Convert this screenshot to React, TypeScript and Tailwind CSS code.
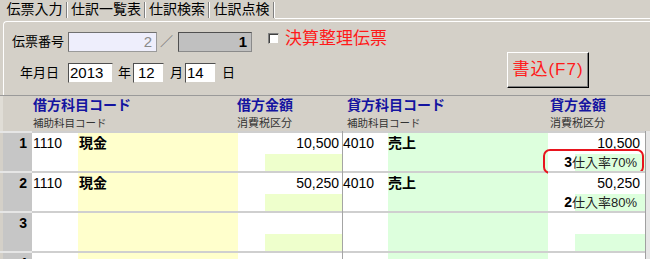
const cols = "grid grid-cols-[32px_46px_160px_104px_1px_45px_160px_97px_5px]";

type Row = {
  no: string;
  dc?: string;
  dn?: string;
  da?: string;
  cc?: string;
  cn?: string;
  ca?: string;
  tax?: [string, string];
  mark?: boolean;
};

const rows: Row[] = [
  { no: "1", dc: "1110", dn: "現金", da: "10,500", cc: "4010", cn: "売上", ca: "10,500", tax: ["3", "仕入率70%"], mark: true },
  { no: "2", dc: "1110", dn: "現金", da: "50,250", cc: "4010", cn: "売上", ca: "50,250", tax: ["2", "仕入率80%"] },
  { no: "3" },
  { no: "4" },
];

function Tab({ w, children }: { w: string; children: string }) {
  return (
    <div className="flex">
      <div className={`${w} text-center pt-[1px]`}>{children}</div>
      <div className="w-px bg-[#808080] mt-[2px] mb-[1px]" />
      <div className="w-px bg-white mt-[2px] mb-[1px]" />
    </div>
  );
}

function GridRow({ r }: { r: Row }) {
  return (
    <div className={`${cols} h-[40px] text-[14px] leading-[21px]`}>
      {/* row number */}
      <div className="border-t-2 border-[#e6e6e6] bg-[#c6c6c6] shadow-[inset_3px_0_0_#d4d0c8] pr-[5px] text-right font-bold">
        {r.no}
      </div>
      {/* debit */}
      <div className="border-t-2 border-[#cfcfcf] bg-white pl-[1px]">{r.dc}</div>
      <div className="border-t-2 border-[#cfcfcf] bg-[#ffffcc] pl-[1px] font-bold">{r.dn}</div>
      <div className="border-t-2 border-[#cfcfcf] bg-white flex flex-col">
        <div className="h-[21px] text-right pr-[3px]">{r.da}</div>
        <div className="ml-[27px] h-[17px] bg-[#eeffcc]" />
      </div>
      <div className="bg-[#a4a4a4]" />
      {/* credit */}
      <div className="border-t-2 border-[#cfcfcf] bg-white">{r.cc}</div>
      <div className="border-t-2 border-[#cfcfcf] bg-[#ddffdd] font-bold">{r.cn}</div>
      <div className="relative border-t-2 border-[#cfcfcf] bg-white flex flex-col">
        <div className="h-[21px] text-right pr-[5px]">{r.ca}</div>
        <div className="h-[17px] flex items-center justify-end pr-[8px] bg-[linear-gradient(to_right,#ffffff_27px,#ddffdd_27px)]">
          {r.tax && (
            <>
              <span className="font-bold text-[14px]">{r.tax[0]}</span>
              <span className="text-[13px] text-[#222]">{r.tax[1]}</span>
            </>
          )}
        </div>
        {r.mark && (
          <div className="absolute left-[-5px] top-[16px] w-[101px] h-[25px] border-2 border-[#e8141e] rounded-[7px]" />
        )}
      </div>
      <div className="border-l border-[#a0a0a0] bg-[#e6e6e6]" />
    </div>
  );
}

export default function App() {
  return (
    <div className="w-[650px] h-[259px] overflow-hidden bg-[#d4d0c8] text-black font-['Liberation_Sans','Noto_Sans_CJK_JP',sans-serif]">
      {/* tabs */}
      <div className="flex h-[19px] text-[14px] leading-[17px]">
        <div className="w-[3px]" />
        <Tab w="w-[63px]">伝票入力</Tab>
        <Tab w="w-[76px]">仕訳一覧表</Tab>
        <Tab w="w-[62px]">仕訳検索</Tab>
        <Tab w="w-[63px]">仕訳点検</Tab>
        <div className="flex-1 border-b border-white" />
      </div>

      {/* header form */}
      <div className="ml-[3px] mt-[2px] h-[74px] border-t border-l border-white rounded-tl-[4px] flex">
        <div className="pl-[8px] pt-[10px]">
          <div className="flex items-center h-[20px]">
            <span className="w-[52px] text-[13px]">伝票番号</span>
            <div className="ml-[4px] w-[89px] h-[20px] bg-[#eeeefc] border border-[#707070] border-r-[#9a9a9a] border-b-[#9a9a9a] text-right pr-[4px] text-[15px] leading-[18px] text-[#8a8a8a]">
              2
            </div>
            <span className="ml-[3px] w-[12px] text-[13px] text-[#777]">／</span>
            <div className="ml-[6px] w-[74px] h-[20px] bg-[#c0c0c0] border border-[#505050] border-r-[#8a8a8a] border-b-[#8a8a8a] text-right pr-[4px] text-[15px] leading-[18px] font-bold">
              1
            </div>
            <div className="ml-[16px] mb-[7px] w-[11px] h-[11px] bg-white border border-[#808080] border-r-[#d4d0c8] border-b-[#d4d0c8] shadow-[inset_1px_1px_0_#404040]" />
            <span className="ml-[6px] mb-[6px] text-[17px] leading-[20px] text-[#ff1a1a]">決算整理伝票</span>
          </div>
          <div className="flex items-center h-[20px] mt-[11px] text-[13px]">
            <span className="ml-[8px] w-[39px]">年月日</span>
            <div className="ml-[9px] w-[45px] h-[20px] bg-white border border-[#505050] border-r-[#d4d0c8] border-b-[#d4d0c8] pl-[1px] text-[15px] leading-[18px]">
              2013
            </div>
            <span className="ml-[5px]">年</span>
            <div className="ml-[2px] w-[31px] h-[20px] bg-white border border-[#505050] border-r-[#d4d0c8] border-b-[#d4d0c8] pl-[4px] text-[15px] leading-[18px]">
              12
            </div>
            <span className="ml-[6px]">月</span>
            <div className="ml-[2px] w-[31px] h-[20px] bg-white border border-[#505050] border-r-[#d4d0c8] border-b-[#d4d0c8] pl-[1px] text-[15px] leading-[18px]">
              14
            </div>
            <span className="ml-[6px]">日</span>
          </div>
        </div>
        <button className="ml-auto mr-[61px] mt-[30px] w-[82px] h-[36px] border border-t-white border-l-white border-r-black border-b-black shadow-[inset_-1px_-1px_0_#808080] bg-[#d4d0c8] text-[17px] tracking-[1px] text-[#ff1a1a]">
          書込(F7)
        </button>
      </div>

      {/* grid header */}
      <div className={`${cols} h-[36px] border-t border-[#9a9a9a]`}>
        <div className="shadow-[inset_3px_0_0_#e0ddd6]" />
        <div className="col-span-2 pl-[1px]">
          <div className="text-[14px] leading-[18px] font-bold text-[#1414a0]">借方科目コード</div>
          <div className="mt-[3px] text-[10.5px] leading-[12px] text-[#333]">補助科目コード</div>
        </div>
        <div className="-ml-[1px]">
          <div className="text-[14px] leading-[18px] font-bold text-[#1414a0]">借方金額</div>
          <div className="mt-[3px] text-[11px] leading-[12px] text-[#333]">消費税区分</div>
        </div>
        <div />
        <div className="col-span-2 pl-[4px]">
          <div className="text-[14px] leading-[18px] font-bold text-[#1414a0]">貸方科目コード</div>
          <div className="mt-[3px] text-[10.5px] leading-[12px] text-[#333]">補助科目コード</div>
        </div>
        <div className="pl-[2px]">
          <div className="text-[14px] leading-[18px] font-bold text-[#1414a0]">貸方金額</div>
          <div className="mt-[3px] text-[11px] leading-[12px] text-[#333]">消費税区分</div>
        </div>
        <div />
      </div>

      {rows.map((r) => (
        <GridRow key={r.no} r={r} />
      ))}
    </div>
  );
}
